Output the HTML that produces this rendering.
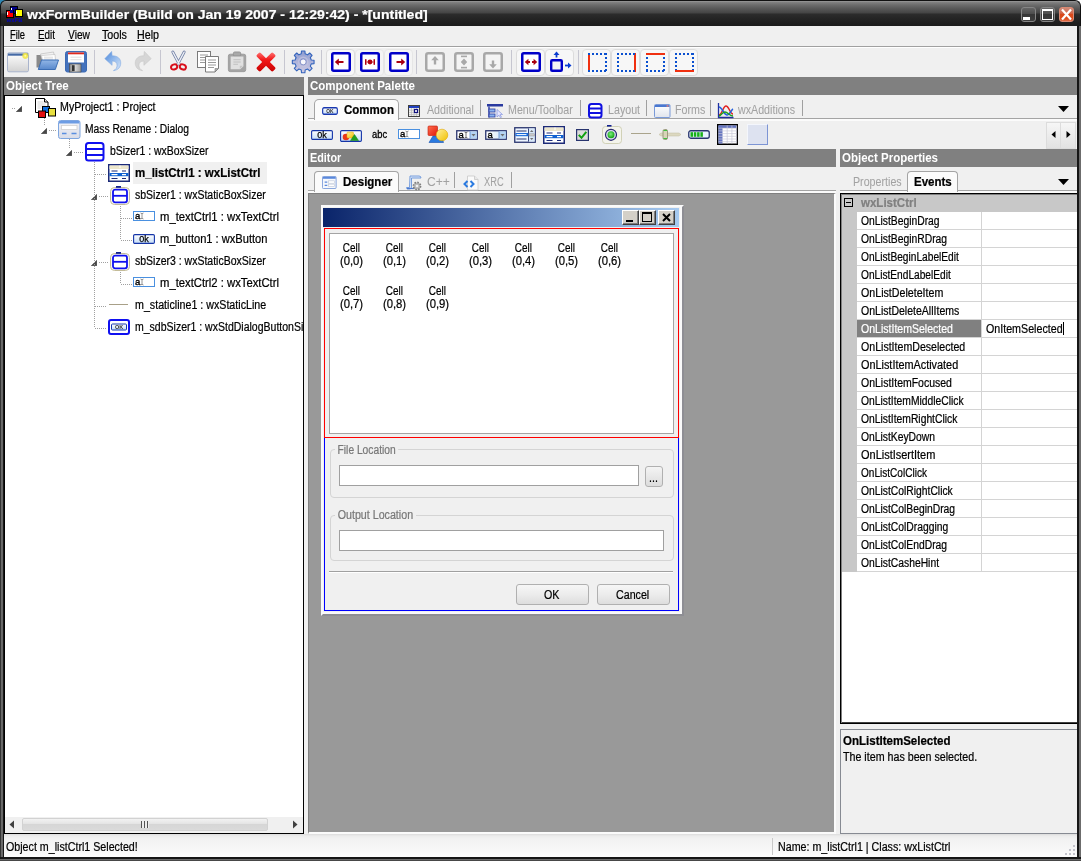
<!DOCTYPE html>
<html><head><meta charset="utf-8"><title>wxFormBuilder</title>
<style>
*{box-sizing:border-box;margin:0;padding:0}
html,body{width:1081px;height:861px;overflow:hidden}
body{position:relative;background:#f0f0f0;font-family:"Liberation Sans",sans-serif;font-size:11px;color:#000;line-height:13px}
.a{position:absolute}
.t{position:absolute;white-space:nowrap;font-size:12px;line-height:14px;transform:scaleX(.89);transform-origin:0 0;-webkit-text-stroke:.22px}
.b{font-weight:bold;transform:scaleX(.96)}
.pt{transform:scaleX(.86)}
.hdr{position:absolute;background:#808080;height:18px}
.hdr span{position:absolute;left:2px;top:2px;color:#fff;font-weight:bold;font-size:12px;line-height:14px;white-space:nowrap;transform:scaleX(.96);transform-origin:0 0}
u{text-decoration:underline}
/* frame */
#frame{left:0;top:0;width:1081px;height:861px;background:#2b2b2b}
#title{left:0;top:0;width:1081px;height:25px;background:linear-gradient(#6e6e6e 0,#5a5a5a 8px,#2e2e2e 14px,#1c1c1c 25px)}
#client{left:4px;top:25px;width:1073px;height:832px;background:#f0f0f0}
.sep{position:absolute;width:1px;background:#c6c6d0;top:50px;height:24px}
.tg{position:absolute;top:49px;height:27px;border:1px solid #dcdcdc;border-radius:4px;background:#f7f7f7}
.tr{position:absolute;left:0;height:22px}
.gray{color:#a2a2a2;-webkit-text-stroke:.05px}
.tabsep{position:absolute;width:1px;background:#a0a0a0}
.prow{position:absolute;left:17px;width:219px;height:18px;border-bottom:1px solid #d4d4d4}
.prow span{position:absolute;left:3px;top:2px;letter-spacing:-.33px;white-space:nowrap}
#w{position:absolute;left:0;top:0;width:1081px;height:861px;will-change:transform}
</style></head><body><div id="w"><svg width="0" height="0" style="position:absolute"><defs>
<linearGradient id="gbtn" x1="0" y1="0" x2="0" y2="1"><stop offset="0" stop-color="#fff"/><stop offset="1" stop-color="#c4dcf8"/></linearGradient>
<linearGradient id="gcho" x1="0" y1="0" x2="1" y2="0"><stop offset="0" stop-color="#fff"/><stop offset="1" stop-color="#cfe4fa"/></linearGradient>
<radialGradient id="ggrn" cx=".45" cy=".4" r=".6"><stop offset="0" stop-color="#7cf07c"/><stop offset="1" stop-color="#10a010"/></radialGradient>
<linearGradient id="gyel" x1="0" y1="0" x2="1" y2="1"><stop offset="0" stop-color="#fff0a0"/><stop offset="1" stop-color="#f0c000"/></linearGradient>
<linearGradient id="gred" x1="0" y1="0" x2="1" y2="1"><stop offset="0" stop-color="#ff7050"/><stop offset="1" stop-color="#e01808"/></linearGradient>
</defs></svg>


<!-- corners -->
<div class="a" style="left:0;top:0;width:6px;height:6px;background:#2e86b4"></div>
<div class="a" style="left:1075px;top:0;width:6px;height:6px;background:#fff"></div>
<div class="a" style="left:0;top:0;width:1081px;height:26px;border-radius:6px 6px 0 0;border:1px solid #111;border-bottom:0;background:linear-gradient(#a0a0a0 0,#828282 1px,#6c6c6c 4px,#565656 8px,#444 12px,#2c2c2c 13px,#242424 18px,#1a1a1a 26px)"></div>
<div class="a" style="left:0;top:26px;width:4px;height:835px;background:linear-gradient(90deg,#333 0,#333 1px,#6c6c6c 1px,#646464 3px,#161616 3px,#161616 4px)"></div>
<div class="a" style="left:1077px;top:26px;width:4px;height:835px;background:linear-gradient(90deg,#161616 0,#161616 2px,#6c6c6c 2px,#6c6c6c 4px)"></div>
<div class="a" style="left:0;top:857px;width:1081px;height:4px;background:linear-gradient(#161616 0,#161616 2px,#6c6c6c 2px,#6c6c6c 3px,#484848 3px)"></div>
<!-- app icon -->
<svg class="a" style="left:5px;top:5px" width="18" height="19" viewBox="0 0 18 19" shape-rendering="crispEdges">
<rect x="5" y="1" width="7" height="7" fill="#00008b" stroke="#000"/>
<rect x="6" y="3" width="1" height="3" fill="#fff"/>
<rect x="1" y="5" width="7" height="7" fill="#f00" stroke="#000"/>
<rect x="2" y="7" width="1" height="3" fill="#fff"/>
<rect x="5" y="5" width="3" height="3" fill="#00008b"/>
<rect x="10" y="4" width="7" height="7" fill="#ff0" stroke="#000"/>
<rect x="11" y="6" width="1" height="3" fill="#fff"/>
<text x="1.5" y="17" font-family="Liberation Sans" font-size="6" font-weight="bold" fill="#0000c0" shape-rendering="auto">wxFB</text>
</svg>
<div class="t" style="left:27px;top:8px;font-size:12px;font-weight:bold;color:#fff;line-height:14px;transform:scaleX(1.169);transform-origin:0 0">wxFormBuilder (Build on Jan 19 2007 - 12:29:42) - *[untitled]</div>
<!-- window buttons -->
<div class="a" style="left:1021px;top:7px;width:15px;height:15px;border:1px solid #858585;border-radius:3px;background:linear-gradient(#666,#4c4c4c 45%,#363636 50%,#3e3e3e)"></div>
<div class="a" style="left:1023px;top:17px;width:7px;height:3px;background:#fff"></div>
<div class="a" style="left:1040px;top:7px;width:15px;height:15px;border:1px solid #858585;border-radius:3px;background:linear-gradient(#666,#4c4c4c 45%,#363636 50%,#3e3e3e)"></div>
<div class="a" style="left:1042px;top:9px;width:11px;height:11px;border:1px solid #fff;border-top-width:2px"></div>
<div class="a" style="left:1059px;top:7px;width:15px;height:15px;border:1px solid #d98a74;border-radius:3px;background:linear-gradient(#cf8a78,#d2664a 40%,#d8481a 50%,#dc4c1c 80%,#e06a44)"></div>
<svg class="a" style="left:1059px;top:7px" width="15" height="15" viewBox="0 0 15 15"><path d="M3 2.5 L12 12.5 M12 2.5 L3 12.5" stroke="#fff" stroke-width="2.2" fill="none"/></svg>


<div class="a" style="left:4px;top:46px;width:1073px;height:1px;background:#a0a0a0"></div>
<div class="a" style="left:4px;top:47px;width:1073px;height:1px;background:#fff"></div>
<div class="t" style="left:10px;top:28px;transform:scaleX(0.776)"><u>F</u>ile</div>
<div class="t" style="left:38px;top:28px;transform:scaleX(0.822)"><u>E</u>dit</div>
<div class="t" style="left:68px;top:28px;transform:scaleX(0.851)"><u>V</u>iew</div>
<div class="t" style="left:102px;top:28px"><u>T</u>ools</div>
<div class="t" style="left:137px;top:28px"><u>H</u>elp</div>


<div class="tg" style="left:326px;width:29px"></div>
<div class="tg" style="left:355px;width:29px;border-color:#e6e6e6;background:#f4f4f4"></div>
<div class="tg" style="left:384px;width:29px;border-color:#e6e6e6;background:#f4f4f4"></div>
<div class="tg" style="left:516px;width:29px"></div>
<div class="tg" style="left:545px;width:29px"></div>
<div class="tg" style="left:582px;width:29px"></div>
<div class="tg" style="left:611px;width:29px"></div>
<div class="tg" style="left:640px;width:29px"></div>
<div class="tg" style="left:669px;width:29px"></div>
<div class="sep" style="left:94px"></div><div class="sep" style="left:160px"></div><div class="sep" style="left:284px"></div><div class="sep" style="left:321px"></div><div class="sep" style="left:416px"></div><div class="sep" style="left:511px"></div><div class="sep" style="left:578px"></div>
<!-- new -->
<svg class="a" style="left:6px;top:51px" width="24" height="23" viewBox="0 0 24 23"><defs><linearGradient id="gn" x1="0" y1="0" x2="0" y2="1"><stop offset="0" stop-color="#fff"/><stop offset="1" stop-color="#d2d2d2"/></linearGradient><radialGradient id="gy"><stop offset="0" stop-color="#fffbd0"/><stop offset=".45" stop-color="#f6ec50"/><stop offset="1" stop-color="#ece040" stop-opacity=".7"/></radialGradient></defs><rect x="1.500" y="1.800" width="21" height="19" rx="1.500" fill="url(#gn)" stroke="#a9b4cc"/><rect x="2" y="2.500" width="20" height="2.200" fill="#456aa6"/><circle cx="19.300" cy="4.800" r="3.100" fill="url(#gy)"/></svg>
<!-- open -->
<svg class="a" style="left:35px;top:51px" width="25" height="20" viewBox="0 0 25 20"><defs><linearGradient id="gop" x1="0" y1="0" x2="0" y2="1"><stop offset="0" stop-color="#92b6e6"/><stop offset="1" stop-color="#5888cc"/></linearGradient></defs><path d="M1.500 4h4l1 1.500h2v11h-7z" fill="#8a8a8a"/><path d="M5.500 3l13-2 1.500 7h-13z" fill="#f2f2f2" stroke="#b4b4b4" stroke-width=".6"/><path d="M6.500 4.500l13.500-1 .5 6h-13z" fill="#fff" stroke="#bcbcbc" stroke-width=".6"/><path d="M9 6.200h9M9 8h9" stroke="#ccc" stroke-width=".7"/><path d="M6.500 9h17l-3.200 9.500h-17z" fill="url(#gop)" stroke="#3c6eb4" stroke-width="1" stroke-linejoin="round"/></svg>
<!-- save -->
<svg class="a" style="left:64px;top:50px" width="24" height="23" viewBox="0 0 24 23"><defs><linearGradient id="gsv" x1="0" y1="0" x2="1" y2="0"><stop offset="0" stop-color="#8a8a8a"/><stop offset=".5" stop-color="#d8d8d8"/><stop offset="1" stop-color="#9a9a9a"/></linearGradient></defs><rect x="1.500" y="1.500" width="21" height="20.500" rx="2" fill="#4472bc" stroke="#3c6ab4"/><rect x="4" y="2.500" width="16" height="10" fill="#fff"/><rect x="4" y="2.500" width="16" height="1.800" fill="#e0281c"/><path d="M6.500 7.200h11M6.500 9.700h11" stroke="#d4d4d4" stroke-width=".8"/><rect x="5.500" y="14" width="11.500" height="8" fill="url(#gsv)" stroke="#444" stroke-width=".6"/><rect x="8" y="15.200" width="2.600" height="5.800" fill="#333"/></svg>
<!-- undo -->
<svg class="a" style="left:103px;top:50px" width="20" height="23" viewBox="0 0 22 24" preserveAspectRatio="none"><defs><linearGradient id="gu" x1="0" y1="0" x2="1" y2="1"><stop offset="0" stop-color="#4a86da"/><stop offset=".55" stop-color="#9cc0ee"/><stop offset="1" stop-color="#d8e6f8"/></linearGradient></defs><path d="M9.5 1.5L2 9l8 7v-4.5c3.5 0 5.5 1.5 5.5 4.5 0 2.500-1.500 4.500-4 5.500 5-.5 8-3.500 8-8 0-4.500-3.500-7.500-9.500-7.500z" fill="url(#gu)" stroke="#7aa6e0" stroke-width=".6"/></svg>
<!-- redo -->
<svg class="a" style="left:133px;top:50px" width="20" height="23" viewBox="0 0 22 24" preserveAspectRatio="none"><path d="M12.5 1.500L20 9l-8 7v-4.500c-3.500 0-5.500 1.500-5.500 4.500 0 2.500 1.500 4.500 4 5.500-5-.5-8-3.500-8-8 0-4.500 3.500-7.500 9.500-7.500z" fill="#d6d6d6" stroke="#c4c4c4" stroke-width=".6"/></svg>
<!-- cut -->
<svg class="a" style="left:168px;top:50px" width="21" height="22" viewBox="0 0 24 24" preserveAspectRatio="none"><path d="M5.500 2.200l7.500 13.500M18.500 2.200L11 15.700" stroke="#6a7aa0" stroke-width="3.200" stroke-linecap="round"/><path d="M5.500 2.200l7.500 13.500M18.500 2.200L11 15.700" stroke="#eef0f6" stroke-width="1.600" stroke-linecap="round"/><ellipse cx="7" cy="18.500" rx="3.600" ry="2.700" fill="none" stroke="#d8101c" stroke-width="2.200" transform="rotate(-20 7 18.500)"/><ellipse cx="17" cy="18.500" rx="3.600" ry="2.700" fill="none" stroke="#d8101c" stroke-width="2.200" transform="rotate(20 17 18.500)"/></svg>
<!-- copy -->
<svg class="a" style="left:196px;top:50px" width="25" height="24" viewBox="0 0 25 24"><rect x="1.500" y="1.500" width="13" height="16" fill="#fff" stroke="#7a7a7a"/><path d="M4 5h8M4 7.500h8M4 10h8M4 12.500h8" stroke="#9a9a9a"/><path d="M9.500 6.500h13v12l-3.500 3.500h-9.500z" fill="#fff" stroke="#7a7a7a"/><path d="M12 10h8M12 12.500h8M12 15h8M12 17.500h6" stroke="#9a9a9a"/><path d="M22.500 18.500h-3.500v3.500z" fill="#b0b0b0" stroke="#7a7a7a" stroke-width=".6"/></svg>
<!-- paste -->
<svg class="a" style="left:227px;top:51px" width="21" height="22" viewBox="0 0 23 24" preserveAspectRatio="none"><rect x="1.500" y="3.500" width="19" height="19" rx="2" fill="#a4a4a4" stroke="#9a9a9a"/><rect x="7" y="1" width="8" height="4.500" rx="1.500" fill="#a8a8a8" stroke="#8a8a8a" stroke-width=".8"/><path d="M4 6h14v10.500l-3.500 3.500h-10.500z" fill="#e0e0e0"/><path d="M7 9.500h8M7 12h8M7 14.500h5" stroke="#bcbcbc"/><path d="M17.500 16h-3.500v3.500z" fill="#c6c6c6"/></svg>
<!-- delete -->
<svg class="a" style="left:255px;top:51px" width="22" height="22" viewBox="0 0 22 22"><defs><linearGradient id="gd" x1="0" y1="0" x2="0" y2="1"><stop offset="0" stop-color="#ff8080"/><stop offset=".4" stop-color="#f21818"/><stop offset="1" stop-color="#c40000"/></linearGradient><clipPath id="cx"><rect x="-0.500" y="8.300" width="23" height="5.400" rx="1.400" transform="rotate(45 11 11)"/><rect x="-0.500" y="8.300" width="23" height="5.400" rx="1.400" transform="rotate(-45 11 11)"/></clipPath></defs><rect x="0" y="0" width="22" height="22" fill="url(#gd)" clip-path="url(#cx)"/></svg>
<!-- gear -->
<svg class="a" style="left:291px;top:50px" width="24" height="24" viewBox="-12 -12 24 24"><defs><linearGradient id="gg" x1="0" y1="0" x2="0" y2="1"><stop offset="0" stop-color="#8e9cd0"/><stop offset="1" stop-color="#d0cce4"/></linearGradient></defs><path d="M-1.94 -8.07 L-1.72 -10.86 L1.72 -10.86 L1.94 -8.07 L4.34 -7.08 L6.47 -8.90 L8.90 -6.47 L7.08 -4.34 L8.07 -1.94 L10.86 -1.72 L10.86 1.72 L8.07 1.94 L7.08 4.34 L8.90 6.47 L6.47 8.90 L4.34 7.08 L1.94 8.07 L1.72 10.86 L-1.72 10.86 L-1.94 8.07 L-4.34 7.08 L-6.47 8.90 L-8.90 6.47 L-7.08 4.34 L-8.07 1.94 L-10.86 1.72 L-10.86 -1.72 L-8.07 -1.94 L-7.08 -4.34 L-8.90 -6.47 L-6.47 -8.90 L-4.34 -7.08Z" fill="url(#gg)" stroke="#3464bc" stroke-width="1.100" stroke-linejoin="round" transform="translate(.2,-.1)"/><circle cx=".2" cy="-.1" r="4.600" fill="none" stroke="#c4c4e0" stroke-width="1.400" opacity=".7"/><circle cx=".2" cy="-.1" r="3" fill="#f8f8fc" stroke="#7a88c4" stroke-width=".9"/></svg>
<svg class="a" style="left:331px;top:52px" width="20" height="20" viewBox="0 0 20 20"><rect x="1.25" y="1.25" width="17.5" height="17.5" rx="1.500" fill="#fff" stroke="#0000c8" stroke-width="2.500"/><path d="M6.500 10h6" stroke="#a80010" stroke-width="2"/><path d="M3.800 10l4-3.400v6.800z" fill="#a80010"/></svg><svg class="a" style="left:360px;top:52px" width="20" height="20" viewBox="0 0 20 20"><rect x="1.25" y="1.25" width="17.5" height="17.5" rx="1.500" fill="#fff" stroke="#0000c8" stroke-width="2.500"/><rect x="5" y="7.200" width="1.500" height="5.600" fill="#b00010"/><rect x="13.500" y="7.200" width="1.500" height="5.600" fill="#b00010"/><circle cx="10" cy="10" r="2.400" fill="#b00010"/><path d="M6.500 10h7" stroke="#b00010" stroke-width=".8"/></svg><svg class="a" style="left:389px;top:52px" width="20" height="20" viewBox="0 0 20 20"><rect x="1.25" y="1.25" width="17.5" height="17.5" rx="1.500" fill="#fff" stroke="#0000c8" stroke-width="2.500"/><path d="M7.500 10h6" stroke="#a80010" stroke-width="2"/><path d="M16.200 10l-4-3.400v6.800z" fill="#a80010"/></svg><svg class="a" style="left:425px;top:52px" width="20" height="20" viewBox="0 0 20 20"><rect x="1.25" y="1.25" width="17.5" height="17.5" rx="2" fill="#f4f4f4" stroke="#a8a8a8" stroke-width="2.5"/><path d="M10 7v5.500" stroke="#a8a8a8" stroke-width="2.400"/><path d="M10 4l3.800 4.200h-7.600z" fill="#a8a8a8"/></svg><svg class="a" style="left:454px;top:52px" width="20" height="20" viewBox="0 0 20 20"><rect x="1.25" y="1.25" width="17.5" height="17.5" rx="2" fill="#f4f4f4" stroke="#a8a8a8" stroke-width="2.5"/><rect x="7" y="3.6" width="6" height="1.6" fill="#a8a8a8"/><rect x="7" y="14.8" width="6" height="1.6" fill="#a8a8a8"/><path d="M10 6.5l3.2 3.5-3.2 3.5-3.2-3.5z" fill="#a8a8a8"/></svg><svg class="a" style="left:483px;top:52px" width="20" height="20" viewBox="0 0 20 20"><rect x="1.25" y="1.25" width="17.5" height="17.5" rx="2" fill="#f4f4f4" stroke="#a8a8a8" stroke-width="2.5"/><path d="M10 8.500v5" stroke="#a8a8a8" stroke-width="2.400"/><path d="M10 16.500l3.800-4.200h-7.600z" fill="#a8a8a8"/></svg><svg class="a" style="left:521px;top:52px" width="20" height="20" viewBox="0 0 20 20"><rect x="1.25" y="1.25" width="17.5" height="17.5" rx="1.500" fill="#fff" stroke="#0000c8" stroke-width="2.500"/><path d="M6 10h3M11 10h3" stroke="#a80010" stroke-width="1.800"/><path d="M3.800 10l3.600-3.200v6.400zM16.200 10l-3.600-3.200v6.400z" fill="#a80010"/><path d="M9.600 10l-2.400-2.200v4.400zM10.400 10l2.400-2.200v4.400z" fill="#a80010" opacity=".0"/></svg><svg class="a" style="left:549px;top:51px" width="23" height="23" viewBox="0 0 23 23"><rect x="2.200" y="9.200" width="10.600" height="10.600" rx="1" fill="#f4f4f4" stroke="#0000c8" stroke-width="2.400"/><path d="M7.500 6.500v-3" stroke="#0a3cd0" stroke-width="1.800"/><path d="M7.500 0.500l3 3.500h-6z" fill="#0a3cd0"/><path d="M16 14.500h3" stroke="#0a3cd0" stroke-width="1.800"/><path d="M22.500 14.500l-3.500-3v6z" fill="#0a3cd0"/></svg><svg class="a" style="left:587px;top:52px" width="21" height="21" viewBox="0 0 21 21" shape-rendering="crispEdges"><path d="M2 1v19" stroke="#f03010" stroke-width="2"/><path d="M19 1v19" stroke="#0a50d0" stroke-width="2" stroke-dasharray="2 2"/><path d="M1 2h19" stroke="#0a50d0" stroke-width="2" stroke-dasharray="2 2"/><path d="M1 19h19" stroke="#0a50d0" stroke-width="2" stroke-dasharray="2 2"/></svg><svg class="a" style="left:616px;top:52px" width="21" height="21" viewBox="0 0 21 21" shape-rendering="crispEdges"><path d="M2 1v19" stroke="#0a50d0" stroke-width="2" stroke-dasharray="2 2"/><path d="M19 1v19" stroke="#f03010" stroke-width="2"/><path d="M1 2h19" stroke="#0a50d0" stroke-width="2" stroke-dasharray="2 2"/><path d="M1 19h19" stroke="#0a50d0" stroke-width="2" stroke-dasharray="2 2"/></svg><svg class="a" style="left:645px;top:52px" width="21" height="21" viewBox="0 0 21 21" shape-rendering="crispEdges"><path d="M2 1v19" stroke="#0a50d0" stroke-width="2" stroke-dasharray="2 2"/><path d="M19 1v19" stroke="#0a50d0" stroke-width="2" stroke-dasharray="2 2"/><path d="M1 2h19" stroke="#f03010" stroke-width="2"/><path d="M1 19h19" stroke="#0a50d0" stroke-width="2" stroke-dasharray="2 2"/></svg><svg class="a" style="left:674px;top:52px" width="21" height="21" viewBox="0 0 21 21" shape-rendering="crispEdges"><path d="M2 1v19" stroke="#0a50d0" stroke-width="2" stroke-dasharray="2 2"/><path d="M19 1v19" stroke="#0a50d0" stroke-width="2" stroke-dasharray="2 2"/><path d="M1 2h19" stroke="#0a50d0" stroke-width="2" stroke-dasharray="2 2"/><path d="M1 19h19" stroke="#f03010" stroke-width="2"/></svg>

<div class="hdr" style="left:4px;top:77px;width:300px"><span>Object Tree</span></div>
<div class="a" id="tree" style="left:4px;top:95px;width:300px;height:739px;border:1px solid #000;background:#fff;overflow:hidden">
<div class="t" style="left:55px;top:4px">MyProject1 : Project</div>
<div class="t" style="left:80px;top:26px;transform:scaleX(0.857)">Mass Rename : Dialog</div>
<div class="t" style="left:105px;top:48px;transform:scaleX(0.869)">bSizer1 : wxBoxSizer</div>
<div class="a" style="left:128px;top:66px;width:134px;height:22px;background:#f0f0f0"></div>
<div class="t b" style="left:130px;top:70px">m_listCtrl1 : wxListCtrl</div>
<div class="t" style="left:130px;top:92px;transform:scaleX(0.875)">sbSizer1 : wxStaticBoxSizer</div>
<div class="t" style="left:155px;top:114px;transform:scaleX(0.939)">m_textCtrl1 : wxTextCtrl</div>
<div class="t" style="left:155px;top:136px;transform:scaleX(0.926)">m_button1 : wxButton</div>
<div class="t" style="left:130px;top:158px;transform:scaleX(0.875)">sbSizer3 : wxStaticBoxSizer</div>
<div class="t" style="left:155px;top:180px;transform:scaleX(0.939)">m_textCtrl2 : wxTextCtrl</div>
<div class="t" style="left:130px;top:202px">m_staticline1 : wxStaticLine</div>
<div class="t" style="left:130px;top:224px;transform:scaleX(0.876)">m_sdbSizer1 : wxStdDialogButtonSizer</div>
<svg class="a" style="left:11px;top:10px" width="6" height="6" viewBox="0 0 6 6"><path d="M5.800 0.300v5.500h-5.500z" fill="#484848" stroke="#303030" stroke-width=".5"/></svg>
<svg class="a" style="left:36px;top:32px" width="6" height="6" viewBox="0 0 6 6"><path d="M5.800 0.300v5.500h-5.500z" fill="#484848" stroke="#303030" stroke-width=".5"/></svg>
<svg class="a" style="left:61px;top:54px" width="6" height="6" viewBox="0 0 6 6"><path d="M5.800 0.300v5.500h-5.500z" fill="#484848" stroke="#303030" stroke-width=".5"/></svg>
<svg class="a" style="left:86px;top:98px" width="6" height="6" viewBox="0 0 6 6"><path d="M5.800 0.300v5.500h-5.500z" fill="#484848" stroke="#303030" stroke-width=".5"/></svg>
<svg class="a" style="left:86px;top:164px" width="6" height="6" viewBox="0 0 6 6"><path d="M5.800 0.300v5.500h-5.500z" fill="#484848" stroke="#303030" stroke-width=".5"/></svg>
<div class="a" style="left:7px;top:12px;width:3px;height:1px;background:repeating-linear-gradient(90deg,#a0a0a0 0,#a0a0a0 1px,transparent 1px,transparent 2px)"></div>
<div class="a" style="left:39px;top:22px;width:1px;height:8px;background:repeating-linear-gradient(#a0a0a0 0,#a0a0a0 1px,transparent 1px,transparent 2px)"></div>
<div class="a" style="left:44px;top:34px;width:8px;height:1px;background:repeating-linear-gradient(90deg,#a0a0a0 0,#a0a0a0 1px,transparent 1px,transparent 2px)"></div>
<div class="a" style="left:64px;top:43px;width:1px;height:9px;background:repeating-linear-gradient(#a0a0a0 0,#a0a0a0 1px,transparent 1px,transparent 2px)"></div>
<div class="a" style="left:69px;top:56px;width:10px;height:1px;background:repeating-linear-gradient(90deg,#a0a0a0 0,#a0a0a0 1px,transparent 1px,transparent 2px)"></div>
<div class="a" style="left:89px;top:66px;width:1px;height:166px;background:repeating-linear-gradient(#a0a0a0 0,#a0a0a0 1px,transparent 1px,transparent 2px)"></div>
<div class="a" style="left:90px;top:78px;width:12px;height:1px;background:repeating-linear-gradient(90deg,#a0a0a0 0,#a0a0a0 1px,transparent 1px,transparent 2px)"></div>
<div class="a" style="left:94px;top:100px;width:10px;height:1px;background:repeating-linear-gradient(90deg,#a0a0a0 0,#a0a0a0 1px,transparent 1px,transparent 2px)"></div>
<div class="a" style="left:94px;top:166px;width:10px;height:1px;background:repeating-linear-gradient(90deg,#a0a0a0 0,#a0a0a0 1px,transparent 1px,transparent 2px)"></div>
<div class="a" style="left:90px;top:210px;width:12px;height:1px;background:repeating-linear-gradient(90deg,#a0a0a0 0,#a0a0a0 1px,transparent 1px,transparent 2px)"></div>
<div class="a" style="left:90px;top:232px;width:12px;height:1px;background:repeating-linear-gradient(90deg,#a0a0a0 0,#a0a0a0 1px,transparent 1px,transparent 2px)"></div>
<div class="a" style="left:115px;top:110px;width:1px;height:34px;background:repeating-linear-gradient(#a0a0a0 0,#a0a0a0 1px,transparent 1px,transparent 2px)"></div>
<div class="a" style="left:116px;top:122px;width:11px;height:1px;background:repeating-linear-gradient(90deg,#a0a0a0 0,#a0a0a0 1px,transparent 1px,transparent 2px)"></div>
<div class="a" style="left:116px;top:144px;width:11px;height:1px;background:repeating-linear-gradient(90deg,#a0a0a0 0,#a0a0a0 1px,transparent 1px,transparent 2px)"></div>
<div class="a" style="left:115px;top:176px;width:1px;height:12px;background:repeating-linear-gradient(#a0a0a0 0,#a0a0a0 1px,transparent 1px,transparent 2px)"></div>
<div class="a" style="left:116px;top:188px;width:11px;height:1px;background:repeating-linear-gradient(90deg,#a0a0a0 0,#a0a0a0 1px,transparent 1px,transparent 2px)"></div>
<svg class="a" style="left:29px;top:1px" width="22" height="21" viewBox="0 0 22 21" ><path d="M1.500 1.500h9l3.500 3.500v10.500h-12.500z" fill="#fff" stroke="#000" stroke-width="1"/><path d="M10.500 1.500v3.500h3.500" fill="#ddd" stroke="#000" stroke-width="1"/><path d="M3.500 5h6M3.500 7h8M3.500 9h8M3.500 11h4" stroke="#c8c8c8" stroke-width=".8"/>
<rect x="8.500" y="9.500" width="7" height="6" fill="#1070e0" stroke="#000"/>
<rect x="4.500" y="14" width="7" height="6.500" fill="#e01010" stroke="#000"/>
<rect x="14.500" y="11.500" width="7" height="7.500" fill="#e8e040" stroke="#000"/></svg>
<svg class="a" style="left:53px;top:24px" width="23" height="19" viewBox="0 0 23 19" ><defs><linearGradient id="gdl" x1="0" y1="0" x2="0" y2="1"><stop offset="0" stop-color="#f4f4f8"/><stop offset="1" stop-color="#d8dce8"/></linearGradient></defs><rect x=".5" y=".5" width="21.500" height="18" rx="2" fill="url(#gdl)" stroke="#7ea6e0"/><path d="M1 3.500v-1.500q0-1 1-1h18.500q1 0 1 1v1.500z" fill="#6c9ce4"/><rect x="3.500" y="5.500" width="15.500" height="4" fill="#fff" stroke="#d0d0d0" stroke-width=".8"/><path d="M4 13.500h4.500M13.500 13.500h5" stroke="#5a8ee0" stroke-width="1.600"/></svg>
<svg class="a" style="left:80px;top:46px" width="20" height="20" viewBox="0 0 20 20" ><rect x="1" y="1" width="17.500" height="17.500" rx="2.500" fill="#fff" stroke="#1010f0" stroke-width="2"/><path d="M1 7h17.500M1 13h17.500" stroke="#1010f0" stroke-width="1.800"/></svg>
<svg class="a" style="left:103px;top:68px" width="22" height="18" viewBox="0 0 22 18" ><rect x=".75" y=".75" width="20.5" height="16.500" fill="#fff" stroke="#1c2a78" stroke-width="1.500"/><rect x="1.500" y="1.500" width="19" height="3.500" fill="#ece6cc"/><rect x="11.500" y="1.500" width="1" height="2.500" fill="#fff"/><rect x="1.500" y="9" width="19" height="3.200" fill="#1060d0"/><path d="M3.500 7h6M14 7h4M3.500 14.500h6M14 14.500h4" stroke="#1c2a78" stroke-width="1.200"/><path d="M3.500 10.600h6M14 10.600h4" stroke="#fff" stroke-width="1.200"/></svg>
<svg class="a" style="left:105px;top:90px" width="20" height="19" viewBox="0 0 20 19" ><rect x=".5" y="1.500" width="19" height="17" rx="4" fill="#fbfaf2" stroke="#c4bc98" stroke-width="1"/><rect x="6" y="0" width="5" height="1.800" fill="#102090"/><rect x="3" y="3.700" width="14" height="12.600" rx="2" fill="#fff" stroke="#1010f0" stroke-width="1.800"/><path d="M3 9.800h14" stroke="#1010f0" stroke-width="1.800"/></svg>
<svg class="a" style="left:128px;top:115px" width="22" height="10" viewBox="0 0 22 10" ><rect x=".5" y=".5" width="21" height="9" fill="#fff" stroke="#4a90e0" stroke-width="1"/><text x="2" y="7.800" font-family="Liberation Sans" font-size="9.500" fill="#000" stroke="#000" stroke-width=".35">a</text><path d="M9 2.500v5M7.500 2l1.500.7 1.500-.7M7.500 8l1.500-.7 1.500.7" stroke="#888" stroke-width=".9" fill="none"/></svg>
<svg class="a" style="left:128px;top:138px" width="22" height="10" viewBox="0 0 22 10" ><rect x=".6" y=".6" width="20.800" height="8.800" rx="1.200" fill="url(#gbtn)" stroke="#1434a8" stroke-width="1.100"/><text x="11" y="8" text-anchor="middle" font-family="Liberation Sans" font-size="9" fill="#000" stroke="#000" stroke-width=".25">0k</text></svg>
<svg class="a" style="left:105px;top:156px" width="20" height="19" viewBox="0 0 20 19" ><rect x=".5" y="1.500" width="19" height="17" rx="4" fill="#fbfaf2" stroke="#c4bc98" stroke-width="1"/><rect x="6" y="0" width="5" height="1.800" fill="#102090"/><rect x="3" y="3.700" width="14" height="12.600" rx="2" fill="#fff" stroke="#1010f0" stroke-width="1.800"/><path d="M3 9.800h14" stroke="#1010f0" stroke-width="1.800"/></svg>
<svg class="a" style="left:128px;top:181px" width="22" height="10" viewBox="0 0 22 10" ><rect x=".5" y=".5" width="21" height="9" fill="#fff" stroke="#4a90e0" stroke-width="1"/><text x="2" y="7.800" font-family="Liberation Sans" font-size="9.500" fill="#000" stroke="#000" stroke-width=".35">a</text><path d="M9 2.500v5M7.500 2l1.500.7 1.500-.7M7.500 8l1.500-.7 1.500.7" stroke="#888" stroke-width=".9" fill="none"/></svg>
<div class="a" style="left:104px;top:208px;width:19px;height:1px;background:#a8a088"></div>
<svg class="a" style="left:103px;top:223px" width="22" height="16" viewBox="0 0 22 16" ><rect x="1" y="1" width="20" height="14" rx="2" fill="#fff" stroke="#1010f0" stroke-width="2"/><rect x="3.500" y="5" width="15" height="6" rx="1" fill="url(#gbtn)" stroke="#1838b0" stroke-width="1"/><text x="11" y="10" text-anchor="middle" font-family="Liberation Sans" font-size="5.500" font-weight="bold" fill="#333">OK</text></svg>

<div class="a" style="left:0;top:721px;width:298px;height:16px;background:#f0f0f0"></div>
<div class="a" style="left:17px;top:722px;width:246px;height:13px;border:1px solid #d2d2d2;border-radius:2px;background:linear-gradient(#f2f2f2,#e4e4e4 45%,#d6d6d6 50%,#dadada)"></div>
<div class="a" style="left:136px;top:725px;width:8px;height:7px;background:repeating-linear-gradient(90deg,#555 0,#555 1px,#eee 1px,#eee 3px)"></div>
<svg class="a" style="left:4px;top:724px" width="6" height="9" viewBox="0 0 6 9"><path d="M5 0.500v8L0.500 4.500z" fill="#404040"/></svg>
<svg class="a" style="left:287px;top:724px" width="6" height="9" viewBox="0 0 6 9"><path d="M1 0.500v8L5.500 4.500z" fill="#404040"/></svg>
</div>


<div class="hdr" style="left:308px;top:77px;width:769px"><span>Component Palette</span></div>
<div class="a" style="left:308px;top:118px;width:769px;height:1px;background:#a4a4a4"></div>
<div class="a" style="left:308px;top:119px;width:769px;height:2px;background:#fbfbfb"></div>
<div class="a" style="left:314px;top:99px;width:85px;height:21px;border:1px solid #a4a4a4;border-bottom:0;border-radius:5px 5px 0 0;background:#fbfbfb"></div>
<div class="t b" style="left:344px;top:103px">Common</div>
<div class="t gray" style="left:427px;top:103px">Additional</div>
<div class="t gray" style="left:508px;top:103px">Menu/Toolbar</div>
<div class="t gray" style="left:608px;top:103px">Layout</div>
<div class="t gray" style="left:675px;top:103px">Forms</div>
<div class="t gray" style="left:738px;top:103px">wxAdditions</div>
<div class="tabsep" style="left:480px;top:100px;height:16px"></div>
<div class="tabsep" style="left:580px;top:100px;height:16px"></div>
<div class="tabsep" style="left:646px;top:100px;height:16px"></div>
<div class="tabsep" style="left:710px;top:100px;height:16px"></div>
<div class="tabsep" style="left:802px;top:100px;height:16px"></div>
<svg class="a" style="left:1058px;top:106px" width="11" height="6" viewBox="0 0 11 6"><path d="M0 0h11L5.500 6z" fill="#000"/></svg>
<svg class="a" style="left:311px;top:130px" width="22" height="10" viewBox="0 0 22 10" ><rect x=".6" y=".6" width="20.800" height="8.800" rx="1.200" fill="url(#gbtn)" stroke="#1434a8" stroke-width="1.100"/><text x="11" y="8" text-anchor="middle" font-family="Liberation Sans" font-size="9" fill="#000" stroke="#000" stroke-width=".25">0k</text></svg>
<svg class="a" style="left:340px;top:130px" width="22" height="12" viewBox="0 0 22 12" ><rect x=".6" y=".6" width="20.800" height="10.800" rx="1.200" fill="url(#gbtn)" stroke="#1434a8" stroke-width="1.100"/><circle cx="6" cy="7" r="3.300" fill="#e83818"/><rect x="7" y="2" width="6.500" height="6" rx="1" fill="url(#gyel)" stroke="#e0a800" stroke-width=".5"/><path d="M14.500 4.500l4 6h-8z" fill="#20a020" stroke="#108010" stroke-width=".5"/></svg>
<div class="t" style="left:372px;top:127px;font-size:11px;transform:scaleX(.85);-webkit-text-stroke:.3px #000">abc</div>
<svg class="a" style="left:398px;top:129px" width="22" height="10" viewBox="0 0 22 10" ><rect x=".5" y=".5" width="21" height="9" fill="#fff" stroke="#4a90e0" stroke-width="1"/><text x="2" y="7.800" font-family="Liberation Sans" font-size="9.500" fill="#000" stroke="#000" stroke-width=".35">a</text><path d="M9 2.500v5M7.500 2l1.500.7 1.500-.7M7.500 8l1.500-.7 1.500.7" stroke="#888" stroke-width=".9" fill="none"/></svg>
<svg class="a" style="left:427px;top:125px" width="23" height="19" viewBox="0 0 23 19" ><path d="M2 17.500l4-6.500h8.500l2 6.500z" fill="#2a7ae0" stroke="#1450b0" stroke-width=".6"/><rect x="1" y="1" width="9.500" height="9.500" rx="1" fill="url(#gred)" stroke="#c01808" stroke-width=".6"/><circle cx="15" cy="10" r="5.800" fill="url(#gyel)" stroke="#e0a800" stroke-width=".6"/></svg>
<svg class="a" style="left:456px;top:130px" width="22" height="10" viewBox="0 0 22 10" ><rect x=".75" y=".75" width="20.500" height="8.500" fill="#fff" stroke="#28346e" stroke-width="1.300"/><rect x="14" y="1.400" width="6.900" height="7.200" fill="#b4d4f4"/><path d="M14 1.400v7.200" stroke="#5a8ad0" stroke-width=".8"/><path d="M15.500 4h4l-2 2.500z" fill="#707070"/><text x="2.500" y="8" font-family="Liberation Sans" font-size="9.500" fill="#000" stroke="#000" stroke-width=".35">a</text><path d="M10 2.500v5M8.500 2l1.500.7 1.500-.7M8.500 8l1.500-.7 1.500.7" stroke="#666" stroke-width=".9" fill="none"/></svg>
<svg class="a" style="left:485px;top:130px" width="22" height="10" viewBox="0 0 22 10" ><rect x=".75" y=".75" width="20.500" height="8.500" fill="url(#gcho)" stroke="#28346e" stroke-width="1.300"/><rect x="14" y="1.400" width="6.900" height="7.200" fill="#b4d4f4"/><path d="M14 1.400v7.200" stroke="#5a8ad0" stroke-width=".8"/><path d="M15.500 4h4l-2 2.500z" fill="#707070"/><text x="2.500" y="8" font-family="Liberation Sans" font-size="9.500" fill="#000" stroke="#000" stroke-width=".35">a</text></svg>
<svg class="a" style="left:514px;top:127px" width="22" height="16" viewBox="0 0 22 16" ><rect x=".75" y=".75" width="20.500" height="14.500" fill="#eef6ff" stroke="#28346e" stroke-width="1.300"/><rect x="14.500" y="1.400" width="6.200" height="13.200" fill="#d8e8f8"/><path d="M14.500 1.400v13.200" stroke="#28346e" stroke-width=".9"/><rect x="1.400" y="6" width="13" height="3.200" fill="#1868d8"/><path d="M2.500 4h10M2.500 12h10" stroke="#28346e" stroke-width="1.200"/><path d="M2.500 7.600h10" stroke="#fff" stroke-width="1"/><rect x="15" y="6.800" width="5.500" height="2.200" fill="#c8c8c8" stroke="#888" stroke-width=".4"/><path d="M16 5l1.700-2 1.700 2zM16 11l1.700 2 1.700-2z" fill="#707070"/></svg>
<svg class="a" style="left:543px;top:126px" width="22" height="18" viewBox="0 0 22 18" ><rect x=".75" y=".75" width="20.5" height="16.500" fill="#fff" stroke="#1c2a78" stroke-width="1.500"/><rect x="1.500" y="1.500" width="19" height="3.500" fill="#ece6cc"/><rect x="11.500" y="1.500" width="1" height="2.500" fill="#fff"/><rect x="1.500" y="9" width="19" height="3.200" fill="#1060d0"/><path d="M3.500 7h6M14 7h4M3.500 14.500h6M14 14.500h4" stroke="#1c2a78" stroke-width="1.200"/><path d="M3.500 10.600h6M14 10.600h4" stroke="#fff" stroke-width="1.200"/></svg>
<svg class="a" style="left:576px;top:129px" width="13" height="12" viewBox="0 0 13 12" ><rect x=".6" y=".6" width="11.800" height="10.800" fill="#dcdcdc" stroke="#28346e" stroke-width="1.200"/><path d="M2.800 5.800l2.700 3 4.800-6" stroke="#10a010" stroke-width="2" fill="none"/></svg>
<svg class="a" style="left:602px;top:125px" width="20" height="19" viewBox="0 0 20 19" ><rect x=".5" y="1.500" width="19" height="17" rx="3" fill="#f4f4ec" stroke="#c8c8a8" stroke-width=".8"/><rect x="5" y="0" width="4.500" height="1.600" fill="#102090"/><circle cx="9" cy="9.800" r="5.500" fill="#dcdcf0" stroke="#282870" stroke-width="1.200"/><circle cx="9" cy="9.800" r="3.500" fill="url(#ggrn)"/></svg>
<div class="a" style="left:631px;top:133px;width:20px;height:1px;background:#aaa48c"></div>
<svg class="a" style="left:658px;top:129px" width="24" height="11" viewBox="0 0 24 11" ><path d="M1 5.500l2-1.500h18l2 1.500-2 1.500h-18z" fill="#dcd8c0" stroke="#c0bca0" stroke-width=".5"/><rect x="5" y=".5" width="4.500" height="10" rx="1.500" fill="#d8d4b8" stroke="#8a8a6a" stroke-width=".8"/><path d="M5.500 1.500h3.500M5.500 9.500h3.500" stroke="#40c040" stroke-width="1"/></svg>
<svg class="a" style="left:688px;top:130px" width="22" height="9" viewBox="0 0 22 9" ><rect x=".75" y=".75" width="20.500" height="7.500" rx="2" fill="#e8f4ff" stroke="#28346e" stroke-width="1.300"/><g fill="#18b018"><rect x="2.500" y="2.200" width="2.500" height="4.600"/><rect x="5.800" y="2.200" width="2.500" height="4.600"/><rect x="9.100" y="2.200" width="2.500" height="4.600"/><rect x="12.400" y="2.200" width="2.500" height="4.600"/></g></svg>
<svg class="a" style="left:717px;top:124px" width="21" height="21" viewBox="0 0 21 21" ><rect x=".75" y=".75" width="19.500" height="19.500" fill="#fff" stroke="#000" stroke-width="1.500"/><rect x="1.500" y="1.500" width="18" height="2.500" fill="#6474c0"/><rect x="1.500" y="1.500" width="4" height="18" fill="#6474c0"/><path d="M1.500 4.2h18" stroke="#c8c8d8" stroke-width=".7"/><path d="M1.500 6.9h18" stroke="#c8c8d8" stroke-width=".7"/><path d="M1.500 9.600000000000001h18" stroke="#c8c8d8" stroke-width=".7"/><path d="M1.500 12.3h18" stroke="#c8c8d8" stroke-width=".7"/><path d="M1.500 15.0h18" stroke="#c8c8d8" stroke-width=".7"/><path d="M1.500 17.700000000000003h18" stroke="#c8c8d8" stroke-width=".7"/><path d="M10.2 1.500v18" stroke="#c8c8d8" stroke-width=".7"/><path d="M14.899999999999999 1.500v18" stroke="#c8c8d8" stroke-width=".7"/><path d="M19.6 1.500v18" stroke="#c8c8d8" stroke-width=".7"/></svg>
<div class="a" style="left:747px;top:124px;width:21px;height:21px;background:#dde2f0;border:1px solid #f4f6fc;border-right-color:#7c94d4;border-bottom-color:#7c94d4"></div>
<svg class="a" style="left:322px;top:107px" width="16" height="8" viewBox="0 0 18 8" preserveAspectRatio="none"><rect x=".75" y=".75" width="16.500" height="6.500" rx="1.500" fill="url(#gbtn)" stroke="#1838b0" stroke-width="1.300"/><text x="9" y="6.200" text-anchor="middle" font-family="Liberation Sans" font-size="5.500" font-weight="bold" fill="#333">OK</text></svg>
<svg class="a" style="left:408px;top:105px" width="12" height="12" viewBox="0 0 12 12" ><rect x=".5" y=".5" width="11" height="11" fill="#f0f0f0" stroke="#404040"/><rect x="1" y="1" width="10" height="2" fill="#2040c0"/><path d="M1 5.2h10" stroke="#b0b0b0" stroke-width=".6"/><path d="M3.5 3v8" stroke="#b0b0b0" stroke-width=".6"/><path d="M1 7.4h10" stroke="#b0b0b0" stroke-width=".6"/><path d="M6.0 3v8" stroke="#b0b0b0" stroke-width=".6"/><path d="M1 9.600000000000001h10" stroke="#b0b0b0" stroke-width=".6"/><path d="M8.5 3v8" stroke="#b0b0b0" stroke-width=".6"/><rect x="6.500" y="4.500" width="3" height="3" fill="#fff" stroke="#101080" stroke-width="1.200"/></svg>
<svg class="a" style="left:487px;top:104px" width="17" height="14" viewBox="0 0 17 14" ><rect x="0" y="0" width="16" height="2.500" fill="#2a3aa0"/><path d="M2 2.500v11" stroke="#2a3aa0" stroke-width="1.400"/><rect x="2" y="5" width="6" height="3" fill="#8ab4f0" stroke="#2a3aa0" stroke-width=".8"/><rect x="2" y="10" width="6" height="3" fill="#8ab4f0" stroke="#2a3aa0" stroke-width=".8"/><path d="M10 5.500v7.500l2-1.800 1.500 2.600 1-.6-1.500-2.500 2.500-.2z" fill="#e8e8ff" stroke="#8090e0" stroke-width=".7"/></svg>
<svg class="a" style="left:588px;top:103px" width="15" height="16" viewBox="0 0 15 16" ><rect x="1" y="1" width="12.500" height="13.500" rx="2.500" fill="#fff" stroke="#1010e0" stroke-width="2"/><path d="M1 5.500h12.500M1 10h12.500" stroke="#1010e0" stroke-width="1.800"/></svg>
<svg class="a" style="left:654px;top:104px" width="17" height="14" viewBox="0 0 17 14" ><defs><linearGradient id="gfm" x1="0" y1="0" x2="0" y2="1"><stop offset="0" stop-color="#fff"/><stop offset="1" stop-color="#e0e4ec"/></linearGradient></defs><rect x=".5" y=".5" width="15.500" height="13" rx="1" fill="url(#gfm)" stroke="#7a9ad8"/><rect x="1" y="1" width="14.500" height="2" fill="#4a78d0"/><rect x="12.500" y="1.200" width="2" height="1.400" fill="#f08070"/></svg>
<svg class="a" style="left:717px;top:103px" width="17" height="16" viewBox="0 0 17 16" ><path d="M1.500 0v14.500h15" stroke="#2030a0" stroke-width="1.300" fill="none"/><path d="M2 12c3 0 4-9 7-9s4 8 7 8" stroke="#e02020" stroke-width="1.500" fill="none"/><path d="M2 4c3 0 5 8 8 8s4-5 6-6" stroke="#2060e0" stroke-width="1.500" fill="none"/><path d="M2 13c2 0 3-4 6-4s4 4 8 4" stroke="#20a020" stroke-width="1.500" fill="none"/></svg>

<div class="a" style="left:1046px;top:122px;width:15px;height:27px;border:1px solid #dcdcdc;background:linear-gradient(#f6f6f6,#e2e2e2)"></div>
<div class="a" style="left:1061px;top:122px;width:15px;height:27px;border:1px solid #dcdcdc;border-left:0;background:linear-gradient(#f6f6f6,#e2e2e2)"></div>
<svg class="a" style="left:1051px;top:131px" width="5" height="7" viewBox="0 0 5 7"><path d="M4.500 0v7L0.500 3.500z" fill="#000"/></svg>
<svg class="a" style="left:1066px;top:131px" width="5" height="7" viewBox="0 0 5 7"><path d="M0.500 0v7L4.500 3.500z" fill="#000"/></svg>


<div class="hdr" style="left:308px;top:149px;width:528px"><span style="transform:scaleX(.9)">Editor</span></div>
<div class="a" style="left:308px;top:190px;width:528px;height:1px;background:#a4a4a4"></div><div class="a" style="left:308px;top:191px;width:528px;height:2px;background:#fbfbfb"></div>
<div class="a" style="left:314px;top:171px;width:85px;height:21px;border:1px solid #a4a4a4;border-bottom:0;border-radius:4px 4px 0 0;background:#fbfbfb"></div>
<div class="t b" style="left:343px;top:175px">Designer</div>
<div class="t gray" style="left:427px;top:175px;transform:scaleX(1.006)">C++</div>
<div class="t gray" style="left:484px;top:175px;transform:scaleX(0.774)">XRC</div>
<div class="tabsep" style="left:454px;top:172px;height:16px"></div>
<div class="tabsep" style="left:511px;top:172px;height:16px"></div>
<svg class="a" style="left:322px;top:176px" width="15" height="13" viewBox="0 0 17 14" preserveAspectRatio="none" ><rect x=".5" y=".5" width="15.500" height="13" rx="1" fill="#f6f8fc" stroke="#7a9ad8"/><rect x="1" y="1" width="14.500" height="2" fill="#5a88dc"/><path d="M3 6.500h3M3 10h3" stroke="#5a88dc" stroke-width="1.400"/><rect x="7.500" y="5.200" width="6.500" height="2.600" fill="#fff" stroke="#c0c8d8" stroke-width=".7"/><rect x="7.500" y="8.800" width="6.500" height="2.600" fill="#fff" stroke="#c0c8d8" stroke-width=".7"/></svg>
<svg class="a" style="left:406px;top:175px" width="17" height="16" viewBox="0 0 17 16" ><path d="M4 1h9q2 0 2 2h-9.500v9q0 2-2 2h-2q-1 0-1-1.500h3z" fill="#dce8fa" stroke="#6a94d8" stroke-width=".9"/><path d="M1 13.500h9" stroke="#4a78d0" stroke-width="1.200"/><circle cx="11" cy="11" r="3.600" fill="#b8b8b8" stroke="#808080" stroke-width="1.600" stroke-dasharray="1.600 1.200"/><circle cx="11" cy="11" r="1.300" fill="#f0f0f0"/></svg>
<svg class="a" style="left:463px;top:175px" width="16" height="16" viewBox="0 0 16 16" ><path d="M4.500 1h7l3.500 3.500v10.500h-10.500z" fill="#fafafa" stroke="#c8c8c8" stroke-width=".8"/><path d="M11.500 1v3.500h3.500" fill="#e8e8e8" stroke="#c8c8c8" stroke-width=".8"/><path d="M4.500 6l-3 3 3 3M7.500 6l3 3-3 3" stroke="#2a7ae0" stroke-width="2" fill="none"/></svg>

<div class="a" style="left:308px;top:193px;width:528px;height:641px;background:#999;border:1px solid #808080;border-right:2px solid #fbfbfb;border-bottom:2px solid #fbfbfb"></div>
<!-- dialog -->
<div class="a" style="left:321px;top:205px;width:363px;height:411px;background:#f0f0f0;border:2px solid #fafafa;border-right-color:#8e8e94;border-bottom-color:#8e8e94"></div><div class="a" style="left:680px;top:207px;width:2px;height:407px;background:#fafafa"></div><div class="a" style="left:323px;top:612px;width:359px;height:2px;background:#fafafa"></div>
<div class="a" style="left:323px;top:208px;width:356px;height:19px;background:linear-gradient(90deg,#0a246a,#a6caf0)"></div>
<div class="a" style="left:622px;top:210px;width:17px;height:15px;background:#d4d0c8;border:1px solid #fff;border-right-color:#404040;border-bottom-color:#404040;box-shadow:inset -1px -1px 0 #808080"></div><div class="a" style="left:626px;top:220px;width:7px;height:2px;background:#000"></div>
<div class="a" style="left:639px;top:210px;width:17px;height:15px;background:#d4d0c8;border:1px solid #fff;border-right-color:#404040;border-bottom-color:#404040;box-shadow:inset -1px -1px 0 #808080"></div><div class="a" style="left:642px;top:212px;width:10px;height:10px;border:1px solid #000;border-top-width:2px"></div>
<div class="a" style="left:658px;top:210px;width:17px;height:15px;background:#d4d0c8;border:1px solid #fff;border-right-color:#404040;border-bottom-color:#404040;box-shadow:inset -1px -1px 0 #808080"></div><svg class="a" style="left:662px;top:213px" width="9" height="9" viewBox="0 0 9 9"><path d="M1 1l7 7M8 1l-7 7" stroke="#000" stroke-width="2"/></svg>

<div class="a" style="left:324px;top:228px;width:355px;height:210px;border:1px solid #f00"></div>
<div class="a" style="left:329px;top:233px;width:345px;height:201px;border:1px solid #a4a4a4;background:#fff"></div>
<div class="a" style="left:324px;top:438px;width:355px;height:173px;border:1px solid #00f;border-top:0"></div>
<div class="t" style="left:329px;top:242px;width:45px;text-align:center;line-height:13px;transform:scaleX(.94);transform-origin:50% 0"><span style="display:inline-block;transform:scaleX(.88)">Cell</span><br>(0,0)</div>
<div class="t" style="left:372px;top:242px;width:45px;text-align:center;line-height:13px;transform:scaleX(.94);transform-origin:50% 0"><span style="display:inline-block;transform:scaleX(.88)">Cell</span><br>(0,1)</div>
<div class="t" style="left:415px;top:242px;width:45px;text-align:center;line-height:13px;transform:scaleX(.94);transform-origin:50% 0"><span style="display:inline-block;transform:scaleX(.88)">Cell</span><br>(0,2)</div>
<div class="t" style="left:458px;top:242px;width:45px;text-align:center;line-height:13px;transform:scaleX(.94);transform-origin:50% 0"><span style="display:inline-block;transform:scaleX(.88)">Cell</span><br>(0,3)</div>
<div class="t" style="left:501px;top:242px;width:45px;text-align:center;line-height:13px;transform:scaleX(.94);transform-origin:50% 0"><span style="display:inline-block;transform:scaleX(.88)">Cell</span><br>(0,4)</div>
<div class="t" style="left:544px;top:242px;width:45px;text-align:center;line-height:13px;transform:scaleX(.94);transform-origin:50% 0"><span style="display:inline-block;transform:scaleX(.88)">Cell</span><br>(0,5)</div>
<div class="t" style="left:587px;top:242px;width:45px;text-align:center;line-height:13px;transform:scaleX(.94);transform-origin:50% 0"><span style="display:inline-block;transform:scaleX(.88)">Cell</span><br>(0,6)</div>
<div class="t" style="left:329px;top:285px;width:45px;text-align:center;line-height:13px;transform:scaleX(.94);transform-origin:50% 0"><span style="display:inline-block;transform:scaleX(.88)">Cell</span><br>(0,7)</div>
<div class="t" style="left:372px;top:285px;width:45px;text-align:center;line-height:13px;transform:scaleX(.94);transform-origin:50% 0"><span style="display:inline-block;transform:scaleX(.88)">Cell</span><br>(0,8)</div>
<div class="t" style="left:415px;top:285px;width:45px;text-align:center;line-height:13px;transform:scaleX(.94);transform-origin:50% 0"><span style="display:inline-block;transform:scaleX(.88)">Cell</span><br>(0,9)</div>

<div class="a" style="left:330px;top:449px;width:344px;height:49px;border:1px solid #d4d4d4;border-radius:4px"></div>
<div class="t" style="left:335px;top:443px;color:#787878;background:#f0f0f0;padding:0 3px;transform:scaleX(0.854)">File Location</div>
<div class="a" style="left:339px;top:465px;width:300px;height:21px;border:1px solid #a0a0a0;background:#fff"></div>
<div class="a" style="left:645px;top:466px;width:18px;height:21px;border:1px solid #b0b0b0;border-radius:3px;background:linear-gradient(#f4f4f4,#e8e8e8 50%,#dcdcdc)"></div>
<div class="t" style="left:649px;top:471px">...</div>
<div class="a" style="left:330px;top:515px;width:344px;height:46px;border:1px solid #d4d4d4;border-radius:4px"></div>
<div class="t" style="left:335px;top:508px;color:#787878;background:#f0f0f0;padding:0 3px">Output Location</div>
<div class="a" style="left:339px;top:530px;width:325px;height:21px;border:1px solid #a0a0a0;background:#fff"></div>
<div class="a" style="left:329px;top:571px;width:344px;height:1px;background:#a0a0a0"></div>
<div class="a" style="left:329px;top:572px;width:344px;height:1px;background:#fff"></div>
<div class="a" style="left:516px;top:584px;width:73px;height:21px;border:1px solid #b0b0b0;border-radius:3px;background:linear-gradient(#f6f6f6,#ececec 50%,#dddddd)"></div>
<div class="t" style="left:544px;top:588px">OK</div>
<div class="a" style="left:597px;top:584px;width:73px;height:21px;border:1px solid #b0b0b0;border-radius:3px;background:linear-gradient(#f6f6f6,#ececec 50%,#dddddd)"></div>
<div class="t" style="left:616px;top:588px">Cancel</div>


<div class="hdr" style="left:840px;top:149px;width:237px"><span>Object Properties</span></div>
<div class="a" style="left:840px;top:190px;width:237px;height:1px;background:#a4a4a4"></div><div class="a" style="left:840px;top:191px;width:237px;height:2px;background:#fbfbfb"></div>
<div class="a" style="left:907px;top:171px;width:51px;height:21px;border:1px solid #a4a4a4;border-bottom:0;border-radius:4px 4px 0 0;background:#fbfbfb"></div>
<div class="t gray" style="left:853px;top:175px">Properties</div>
<div class="t b" style="left:914px;top:175px">Events</div>
<svg class="a" style="left:1058px;top:179px" width="11" height="6" viewBox="0 0 11 6"><path d="M0 0h11L5.500 6z" fill="#000"/></svg>
<div class="a" style="left:840px;top:193px;width:237px;height:531px;border:1px solid #000;border-right:0;box-shadow:inset 1px 1px 0 0 #808080,inset 0 -1px 0 0 #404040;background:#fff"></div>
<div class="a" style="left:842px;top:195px;width:235px;height:17px;background:#c8c8c8"></div>
<div class="a" style="left:842px;top:195px;width:15px;height:377px;background:#c8c8c8"></div>
<div class="a" style="left:844px;top:198px;width:9px;height:9px;border:1px solid #000"></div>
<div class="a" style="left:846px;top:202px;width:5px;height:1px;background:#000"></div>
<div class="t b" style="left:861px;top:196px;color:#808080">wxListCtrl</div>
<div class="a" style="left:981px;top:212px;width:1px;height:360px;background:#d4d4d4"></div>
<div class="a" style="left:857px;top:229px;width:220px;height:1px;background:#d4d4d4"></div><div class="t pt" style="left:861px;top:214px">OnListBeginDrag</div>
<div class="a" style="left:857px;top:247px;width:220px;height:1px;background:#d4d4d4"></div><div class="t pt" style="left:861px;top:232px">OnListBeginRDrag</div>
<div class="a" style="left:857px;top:265px;width:220px;height:1px;background:#d4d4d4"></div><div class="t pt" style="left:861px;top:250px;transform:scaleX(0.848)">OnListBeginLabelEdit</div>
<div class="a" style="left:857px;top:283px;width:220px;height:1px;background:#d4d4d4"></div><div class="t pt" style="left:861px;top:268px;transform:scaleX(0.846)">OnListEndLabelEdit</div>
<div class="a" style="left:857px;top:301px;width:220px;height:1px;background:#d4d4d4"></div><div class="t pt" style="left:861px;top:286px;transform:scaleX(0.888)">OnListDeleteItem</div>
<div class="a" style="left:857px;top:319px;width:220px;height:1px;background:#d4d4d4"></div><div class="t pt" style="left:861px;top:304px;transform:scaleX(0.877)">OnListDeleteAllItems</div>
<div class="a" style="left:857px;top:337px;width:220px;height:1px;background:#d4d4d4"></div><div class="a" style="left:857px;top:320px;width:124px;height:17px;background:#808080"></div><div class="t pt" style="left:861px;top:322px;color:#fff;transform:scaleX(0.878)">OnListItemSelected</div><div class="t pt" style="left:986px;top:322px;transform:scaleX(0.890)">OnItemSelected</div><div class="a" style="left:1063px;top:322px;width:1px;height:13px;background:#000"></div>
<div class="a" style="left:857px;top:355px;width:220px;height:1px;background:#d4d4d4"></div><div class="t pt" style="left:861px;top:340px;transform:scaleX(0.883)">OnListItemDeselected</div>
<div class="a" style="left:857px;top:373px;width:220px;height:1px;background:#d4d4d4"></div><div class="t pt" style="left:861px;top:358px;transform:scaleX(0.905)">OnListItemActivated</div>
<div class="a" style="left:857px;top:391px;width:220px;height:1px;background:#d4d4d4"></div><div class="t pt" style="left:861px;top:376px;transform:scaleX(0.874)">OnListItemFocused</div>
<div class="a" style="left:857px;top:409px;width:220px;height:1px;background:#d4d4d4"></div><div class="t pt" style="left:861px;top:394px">OnListItemMiddleClick</div>
<div class="a" style="left:857px;top:427px;width:220px;height:1px;background:#d4d4d4"></div><div class="t pt" style="left:861px;top:412px">OnListItemRightClick</div>
<div class="a" style="left:857px;top:445px;width:220px;height:1px;background:#d4d4d4"></div><div class="t pt" style="left:861px;top:430px">OnListKeyDown</div>
<div class="a" style="left:857px;top:463px;width:220px;height:1px;background:#d4d4d4"></div><div class="t pt" style="left:861px;top:448px;transform:scaleX(0.914)">OnListIsertItem</div>
<div class="a" style="left:857px;top:481px;width:220px;height:1px;background:#d4d4d4"></div><div class="t pt" style="left:861px;top:466px;transform:scaleX(0.838)">OnListColClick</div>
<div class="a" style="left:857px;top:499px;width:220px;height:1px;background:#d4d4d4"></div><div class="t pt" style="left:861px;top:484px">OnListColRightClick</div>
<div class="a" style="left:857px;top:517px;width:220px;height:1px;background:#d4d4d4"></div><div class="t pt" style="left:861px;top:502px">OnListColBeginDrag</div>
<div class="a" style="left:857px;top:535px;width:220px;height:1px;background:#d4d4d4"></div><div class="t pt" style="left:861px;top:520px">OnListColDragging</div>
<div class="a" style="left:857px;top:553px;width:220px;height:1px;background:#d4d4d4"></div><div class="t pt" style="left:861px;top:538px">OnListColEndDrag</div>
<div class="a" style="left:857px;top:571px;width:220px;height:1px;background:#d4d4d4"></div><div class="t pt" style="left:861px;top:556px">OnListCasheHint</div>

<div class="a" style="left:840px;top:729px;width:237px;height:105px;border:1px solid #868a92;border-right:0;background:#f0f0f0"></div>
<div class="t b" style="left:843px;top:734px">OnListItemSelected</div>
<div class="t" style="left:843px;top:750px">The item has been selected.</div>


<div class="a" style="left:4px;top:834px;width:1073px;height:23px;background:linear-gradient(#dcdcdc 0,#ececec 2px,#f2f2f2 5px,#f6f6f6 14px,#fdfdfd 22px)"></div>
<div class="t" style="left:6px;top:840px">Object m_listCtrl1 Selected!</div>
<div class="a" style="left:772px;top:838px;width:1px;height:17px;background:#c8c8c8"></div>
<div class="t" style="left:778px;top:840px">Name: m_listCtrl1 | Class: wxListCtrl</div>
<svg class="a" style="left:1063px;top:843px" width="13" height="13" viewBox="0 0 13 13" shape-rendering="crispEdges"><g fill="#c4c4cc"><rect x="10" y="2" width="2" height="2"/><rect x="10" y="6" width="2" height="2"/><rect x="10" y="10" width="2" height="2"/><rect x="6" y="6" width="2" height="2"/><rect x="6" y="10" width="2" height="2"/><rect x="2" y="10" width="2" height="2"/></g></svg>

</div></body></html>
